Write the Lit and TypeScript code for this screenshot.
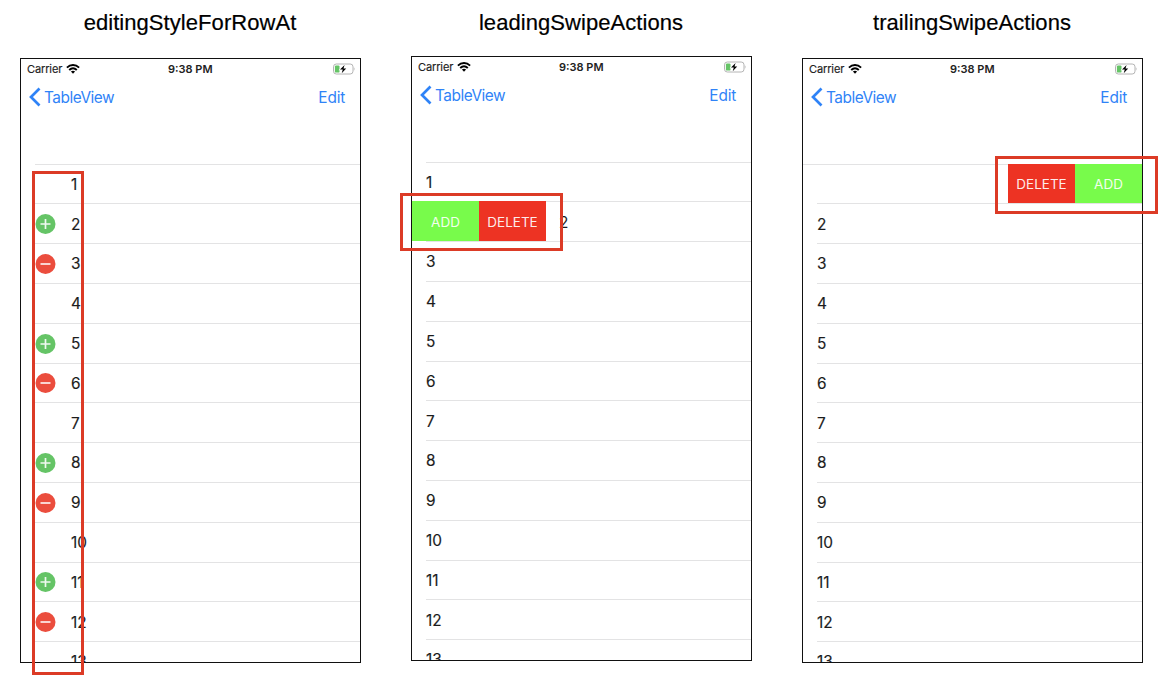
import { LitElement, html, css, nothing } from "lit";
import { customElement, property } from "lit/decorators.js";

type Mode = "editing" | "leading" | "trailing";

const ROWS = Array.from({ length: 13 }, (_, i) => i + 1);

@customElement("phone-screen")
class PhoneScreen extends LitElement {
  @property() mode: Mode = "editing";

  static styles = css`
    :host {
      display: block;
      box-sizing: border-box;
      width: 341px;
      height: 605px;
      border: 1px solid #111;
      overflow: hidden;
      background: #fff;
      font-family: Inter, "Liberation Sans", sans-serif;
    }
    .status {
      display: grid;
      grid-template-columns: 1fr auto 1fr;
      align-items: center;
      height: 20px;
      padding: 0 6.5px 0 6px;
      font-size: 11px;
      color: #222;
    }
    .carrier {
      display: flex;
      align-items: center;
      gap: 4px;
      letter-spacing: -0.12px;
      -webkit-text-stroke: 0.15px #222;
    }
    .time {
      font-weight: 600;
      font-size: 11px;
    }
    .battery {
      justify-self: end;
      display: block;
      margin-right: -1px;
    }
    .wifi, .chevron { display: block; }
    .nav {
      display: flex;
      justify-content: space-between;
      align-items: center;
      height: 36px;
      padding: 0 15px 2px 8px;
      font-size: 15.4px;
      color: #2f83f7;
    }
    .back {
      display: flex;
      align-items: center;
      gap: 3px;
      letter-spacing: -0.47px;
    }
    .edit { letter-spacing: -0.2px; }
    .list { padding-top: 46.7px; }
    .row {
      display: flex;
      align-items: center;
      box-sizing: border-box;
      height: 39.8px;
      padding-top: 1.5px;
      padding-left: 14px;
      font-size: 15.4px;
      color: #1c1c1c;
      -webkit-text-stroke: 0.15px #1c1c1c;
      background: linear-gradient(#e3e3e4, #e3e3e4) 14px 0 / 100% 1px no-repeat;
    }
    .slot {
      display: flex;
      width: 36px;
      box-sizing: border-box;
    }
    .swiped {
      padding-left: 0;
      padding-top: 0;
      -webkit-text-stroke: 0;
    }
    .actions {
      display: flex;
      align-self: stretch;
      font-size: 13.5px;
    }
    .action {
      display: flex;
      align-items: center;
      justify-content: center;
      box-sizing: border-box;
      padding-top: 1.5px;
      width: 67px;
      color: rgba(255, 255, 255, 0.92);
    }
    .add { background: #78fb4b; }
    .delete { background: #ed3323; }
    .leading .num {
      margin-left: 13px;
      padding-top: 1.5px;
    }
    .leading { background-position: 14px 0; }
    .trailing {
      justify-content: flex-end;
      background-position: 0 0;
    }
  `;

  private circle(n: number) {
    const kind = n % 3;
    if (kind === 1) return nothing;
    return html`<svg width="21" height="20" viewBox="0 0 21 20">
      <circle cx="10.5" cy="10" r="10" fill=${kind === 2 ? "#65c466" : "#eb4d3d"} />
      <path d=${kind === 2 ? "M5.5 10h10M10.5 5v10" : "M5.5 10h10"} stroke="#fff" stroke-width="1.7" stroke-opacity=".9" />
    </svg>`;
  }

  private row(n: number) {
    const add = html`<div class="action add">ADD</div>`;
    const del = html`<div class="action delete">DELETE</div>`;
    if (this.mode === "leading" && n === 2)
      return html`<div class="row swiped leading"><div class="actions">${add}${del}</div><span class="num">2</span></div>`;
    if (this.mode === "trailing" && n === 1)
      return html`<div class="row swiped trailing"><div class="actions">${del}${add}</div></div>`;
    return html`<div class="row">
      ${this.mode === "editing" ? html`<div class="slot">${this.circle(n)}</div>` : nothing}<span>${n}</span>
    </div>`;
  }

  render() {
    return html`
      <div class="status">
        <div class="carrier"><span>Carrier</span>
          <svg class="wifi" width="14" height="10" viewBox="0 0 14 10" fill="none" stroke="#000" stroke-width="1.9">
            <path d="M.9 3.6C4.4.2 9.6.2 13.1 3.6" />
            <path d="M3.2 6C5.5 3.8 8.5 3.8 10.8 6" />
            <path d="M7 9.8L4.9 7.6Q7 5.9 9.1 7.6Z" fill="#000" stroke="none" />
          </svg>
        </div>
        <span class="time">9:38 PM</span>
        <svg class="battery" width="23" height="12" viewBox="0 0 23 12">
          <rect x="1.5" y="1" width="19.5" height="10" rx="2.8" fill="#fff" stroke="#b4b4b4" />
          <path d="M21.9 4.3q1.2 1.7 0 3.4z" fill="#aaa" />
          <rect x="2.9" y="2.4" width="4.6" height="7.2" rx="1.2" fill="#65c466" />
          <path d="M12.6 2L8 6.6H10.8L9.7 10.2L14.2 5.4H11.5Z" fill="#000" stroke="#fff" stroke-width="1.2" paint-order="stroke" />
        </svg>
      </div>
      <div class="nav">
        <div class="back">
          <svg class="chevron" width="12" height="20" viewBox="0 0 12 20">
            <path d="M10.5 1.5L2 10L10.5 18.5" fill="none" stroke="#2f83f7" stroke-width="2.7" />
          </svg><span>TableView</span>
        </div>
        <span class="edit">Edit</span>
      </div>
      <div class="list">${ROWS.map((n) => this.row(n))}</div>
    `;
  }
}

@customElement("app-root")
class AppRoot extends LitElement {
  static styles = css`
    :host {
      display: block;
      box-sizing: border-box;
      width: 1168px;
      height: 686px;
      padding-left: 20px;
      overflow: hidden;
      background: #fff;
    }
    .board {
      display: grid;
      grid-template-columns: repeat(3, 340px);
      column-gap: 51px;
    }
    .panel { position: relative; }
    .title {
      height: 58px;
      box-sizing: border-box;
      padding-top: 10px;
      margin: 0;
      font: 400 22px/25px "Liberation Sans", Arial, sans-serif;
      letter-spacing: 0.06px;
      -webkit-text-stroke: 0.2px #000;
      text-align: center;
      color: #000;
      white-space: nowrap;
    }
    .panel.leading .title { height: 56px; }
    .mark {
      position: absolute;
      box-sizing: border-box;
      border: 3px solid #dc3b26;
    }
    .editing .mark { left: 12px; top: 171px; width: 52px; height: 504px; }
    .leading .mark { left: -11px; top: 193px; width: 163px; height: 58px; }
    .trailing .mark { left: 193px; top: 156px; width: 163px; height: 58px; }
  `;

  render() {
    const panels: [Mode, string][] = [
      ["editing", "editingStyleForRowAt"],
      ["leading", "leadingSwipeActions"],
      ["trailing", "trailingSwipeActions"],
    ];
    return html`<div class="board">
      ${panels.map(
        ([mode, title]) => html`<section class="panel ${mode}">
          <h2 class="title">${title}</h2>
          <phone-screen .mode=${mode}></phone-screen>
          <div class="mark"></div>
        </section>`
      )}
    </div>`;
  }
}
